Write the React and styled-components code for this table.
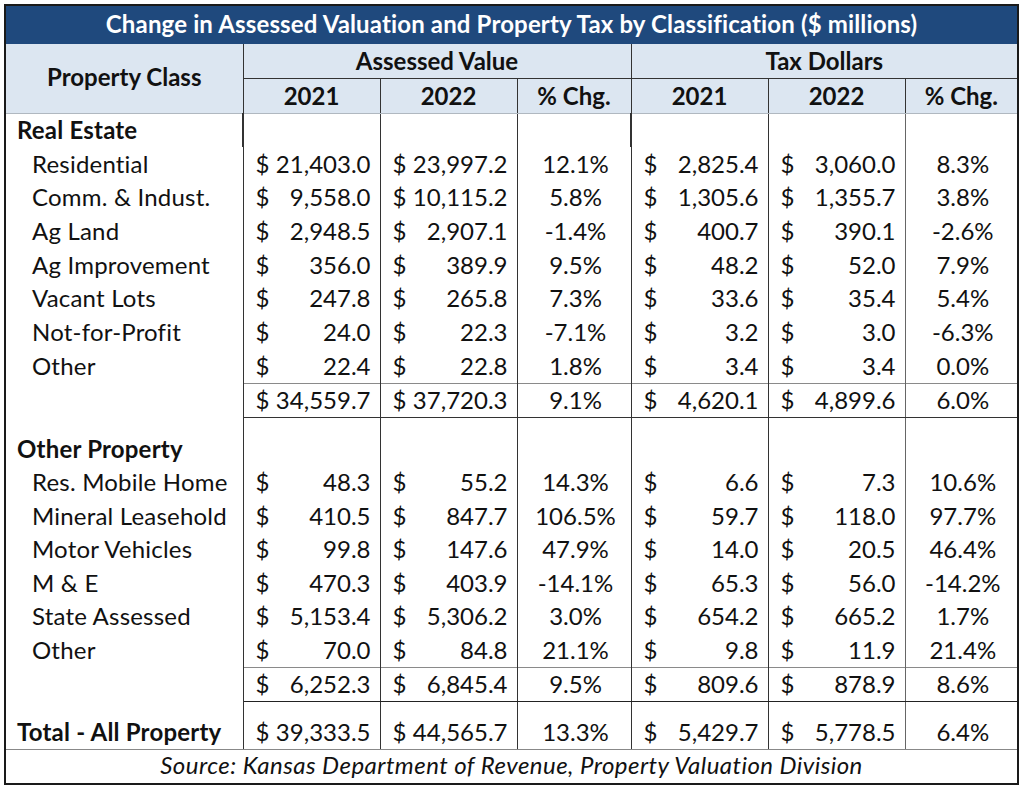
import styled, { createGlobalStyle } from "styled-components";

const GlobalStyle = createGlobalStyle`
  body {
    margin: 0;
    background: #ffffff;
    font-family: Lato, "Open Sans", sans-serif;
    color: #111;
  }
`;

const Page = styled.div`
  padding: 4px 0 0 4px;
`;

const Table = styled.table`
  border-collapse: collapse;
  table-layout: fixed;
  width: 1013px;
  border: 2px solid #1a1a1a;
  font-size: 24px;
  line-height: 1.15;
`;

const Row = styled.tr`
  height: ${(p) => p.$h}px;
`;

const TitleCell = styled.td`
  background: #1f497d;
  color: #fff;
  font-weight: 700;
  font-size: 24px;
  letter-spacing: 0.15px;
  text-align: center;
  padding: 0 0 2px;
`;

const HeadCell = styled.th`
  background: #dce6f1;
  font-weight: 700;
  font-size: 24px;
  text-align: center;
  vertical-align: ${(p) => (p.$middle ? "middle" : "bottom")};
  padding: 0 0 3px;
  border-left: ${(p) => (p.$left ? "1px solid #333" : "none")};
  border-bottom: 1px solid ${(p) => (p.$darkBottom ? "#333" : "#b0b8c0")};
`;

const LabelCell = styled.td`
  font-weight: ${(p) => (p.$bold ? 700 : 400)};
  padding: 0 0 3px ${(p) => (p.$bold ? 11 : 26)}px;
  vertical-align: bottom;
  white-space: nowrap;
  letter-spacing: 0.2px;
  border-right: ${(p) => (p.$thick ? "2px" : "1px")} solid #333;
  border-bottom: ${(p) => (p.$bottom ? "1px solid #888" : "none")};
`;

const DataCell = styled.td`
  padding: 0 9px 3px 12px;
  vertical-align: bottom;
  white-space: nowrap;
  text-align: ${(p) => (p.$center ? "center" : "left")};
  border-left: ${(p) => (p.$thick ? "2px" : "1px")} solid ${(p) => (p.$grey ? "#666" : "#333")};
  border-top: ${(p) => (p.$top ? "1px solid #8a8a8a" : "none")};
  border-bottom: ${(p) => p.$bottom || "none"};
`;

const Money = styled.div`
  display: flex;
  justify-content: space-between;
  gap: 6px;
`;

const SourceCell = styled.td`
  font-style: italic;
  font-size: 24px;
  letter-spacing: 0.45px;
  text-align: center;
  padding: 0 0 3px;
  vertical-align: middle;
`;

const realEstate = [
  ["Residential", "21,403.0", "23,997.2", "12.1%", "2,825.4", "3,060.0", "8.3%"],
  ["Comm. & Indust.", "9,558.0", "10,115.2", "5.8%", "1,305.6", "1,355.7", "3.8%"],
  ["Ag Land", "2,948.5", "2,907.1", "-1.4%", "400.7", "390.1", "-2.6%"],
  ["Ag Improvement", "356.0", "389.9", "9.5%", "48.2", "52.0", "7.9%"],
  ["Vacant Lots", "247.8", "265.8", "7.3%", "33.6", "35.4", "5.4%"],
  ["Not-for-Profit", "24.0", "22.3", "-7.1%", "3.2", "3.0", "-6.3%"],
  ["Other", "22.4", "22.8", "1.8%", "3.4", "3.4", "0.0%"],
];
const realSub = ["34,559.7", "37,720.3", "9.1%", "4,620.1", "4,899.6", "6.0%"];
const realHeights = [34, 33, 34, 34, 33, 34, 34];

const otherProp = [
  ["Res. Mobile Home", "48.3", "55.2", "14.3%", "6.6", "7.3", "10.6%"],
  ["Mineral Leasehold", "410.5", "847.7", "106.5%", "59.7", "118.0", "97.7%"],
  ["Motor Vehicles", "99.8", "147.6", "47.9%", "14.0", "20.5", "46.4%"],
  ["M & E", "470.3", "403.9", "-14.1%", "65.3", "56.0", "-14.2%"],
  ["State Assessed", "5,153.4", "5,306.2", "3.0%", "654.2", "665.2", "1.7%"],
  ["Other", "70.0", "84.8", "21.1%", "9.8", "11.9", "21.4%"],
];
const otherSub = ["6,252.3", "6,845.4", "9.5%", "809.6", "878.9", "8.6%"];
const otherHeights = [33, 34, 33, 34, 33, 34];

function MoneyValue({ value }) {
  return (
    <Money>
      <span>$</span>
      <span>{value}</span>
    </Money>
  );
}

function DataCells({ values, top, bottom, thick }) {
  return values.map((v, i) => {
    const pct = i === 2 || i === 5;
    return (
      <DataCell
        key={i}
        $center={pct}
        $grey={i === 5}
        $top={top}
        $bottom={bottom}
        $thick={thick && (i === 0 || i === 3)}
      >
        {pct ? v : <MoneyValue value={v} />}
      </DataCell>
    );
  });
}

const empty = ["", "", "", "", "", ""];

function BlankCells({ thick }) {
  return empty.map((_, i) => (
    <DataCell key={i} $grey={i === 5} $thick={thick && (i === 0 || i === 3)} />
  ));
}

export default function App() {
  return (
    <Page>
      <GlobalStyle />
      <Table>
        <colgroup>
          <col style={{ width: 238 }} />
          <col style={{ width: 137 }} />
          <col style={{ width: 137 }} />
          <col style={{ width: 114 }} />
          <col style={{ width: 137 }} />
          <col style={{ width: 137 }} />
          <col style={{ width: 113 }} />
        </colgroup>
        <tbody>
          <Row $h={39}>
            <TitleCell colSpan={7}>
              Change in Assessed Valuation and Property Tax by Classification ($ millions)
            </TitleCell>
          </Row>
          <Row $h={34}>
            <HeadCell rowSpan={2} $middle>
              Property Class
            </HeadCell>
            <HeadCell colSpan={3} $left $darkBottom>
              Assessed Value
            </HeadCell>
            <HeadCell colSpan={3} $left $darkBottom>
              Tax Dollars
            </HeadCell>
          </Row>
          <Row $h={35}>
            <HeadCell $left>2021</HeadCell>
            <HeadCell $left>2022</HeadCell>
            <HeadCell $left>% Chg.</HeadCell>
            <HeadCell $left>2021</HeadCell>
            <HeadCell $left>2022</HeadCell>
            <HeadCell $left>% Chg.</HeadCell>
          </Row>

          <Row $h={34}>
            <LabelCell $bold $thick>
              Real Estate
            </LabelCell>
            <BlankCells thick />
          </Row>
          {realEstate.map(([label, ...vals], r) => (
            <Row key={label + r} $h={realHeights[r]}>
              <LabelCell>{label}</LabelCell>
              <DataCells values={vals} />
            </Row>
          ))}
          <Row $h={34}>
            <LabelCell />
            <DataCells values={realSub} top bottom="1px solid #333" />
          </Row>

          <Row $h={15}>
            <LabelCell />
            <BlankCells />
          </Row>
          <Row $h={34}>
            <LabelCell $bold>Other Property</LabelCell>
            <BlankCells />
          </Row>
          {otherProp.map(([label, ...vals], r) => (
            <Row key={label + r} $h={otherHeights[r]}>
              <LabelCell>{label}</LabelCell>
              <DataCells values={vals} />
            </Row>
          ))}
          <Row $h={34}>
            <LabelCell />
            <DataCells values={otherSub} top bottom="1px solid #222" />
          </Row>

          <Row $h={48}>
            <LabelCell $bold $bottom>
              Total - All Property
            </LabelCell>
            <DataCells
              values={["39,333.5", "44,565.7", "13.3%", "5,429.7", "5,778.5", "6.4%"]}
              bottom="1px solid #888"
            />
          </Row>
          <Row $h={35}>
            <SourceCell colSpan={7}>
              Source: Kansas Department of Revenue, Property Valuation Division
            </SourceCell>
          </Row>
        </tbody>
      </Table>
    </Page>
  );
}
